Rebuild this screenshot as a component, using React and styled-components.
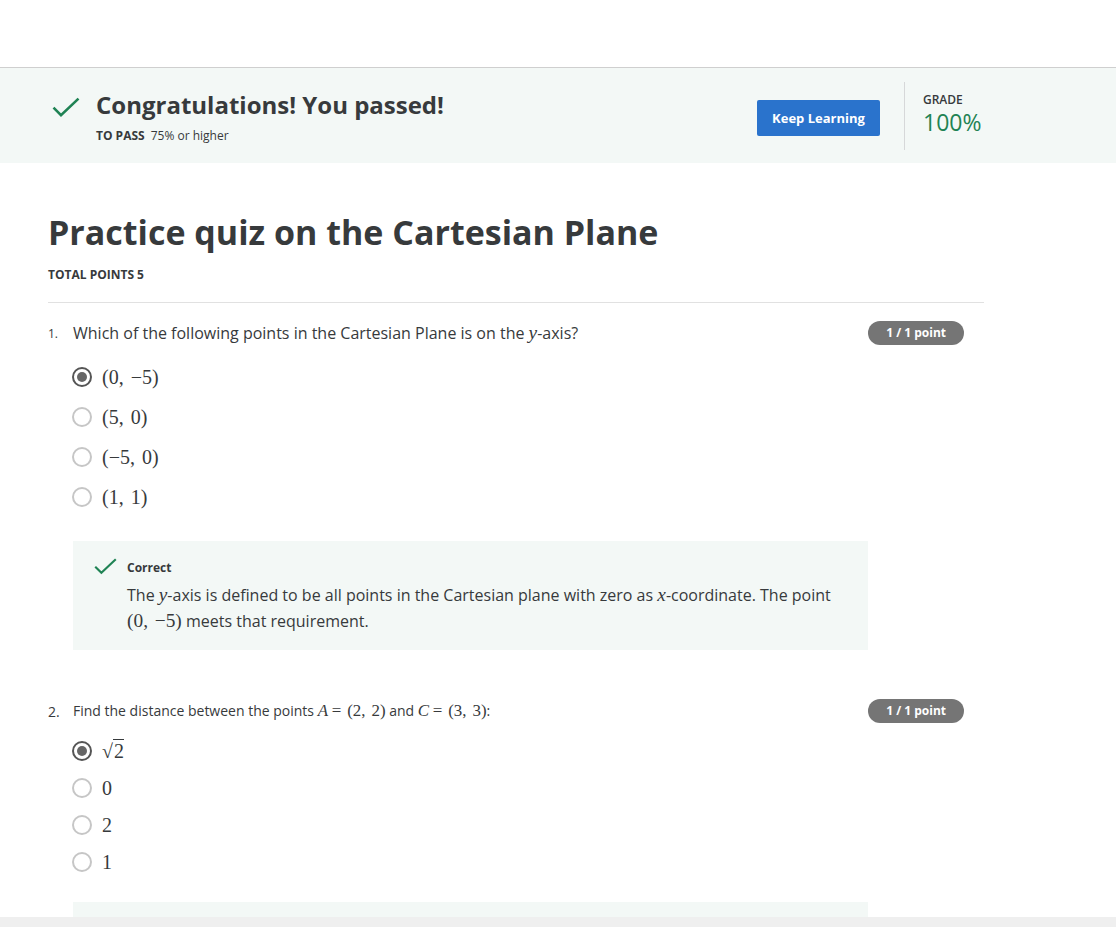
import React from 'react';
import styled, { createGlobalStyle } from 'styled-components';

const GlobalStyle = createGlobalStyle`
  html, body {
    margin: 0;
    padding: 0;
    background: #fff;
    font-family: "Open Sans", "Noto Sans", sans-serif;
    color: #1f1f1f;
  }
`;

const Page = styled.div`
  height: 927px;
  display: flex;
  flex-direction: column;
  overflow: hidden;
`;

const TopBar = styled.div`
  height: 67px;
  flex: none;
  border-bottom: 1px solid #cfcfcf;
`;

const Banner = styled.section`
  flex: none;
  height: 95px;
  background: #f3f8f6;
  display: flex;
  align-items: center;
  padding: 0 113px 0 52px;
`;

const PassGroup = styled.div`
  flex: 1;
  display: flex;
  align-items: flex-start;
  gap: 16px;
  margin-top: 2px;
`;

const PassText = styled.div`
  display: flex;
  flex-direction: column;
`;

const PassTitle = styled.h2`
  margin: 0;
  font-size: 24px;
  font-weight: 700;
  line-height: 32px;
  color: #373a3c;
`;

const PassSub = styled.div`
  font-size: 12px;
  color: #373a3c;
  margin-top: 6px;

  b {
    font-weight: 700;
    margin-right: 6px;
  }
`;

const KeepButton = styled.button`
  height: 36px;
  width: 123px;
  background: #2a73cc;
  color: #fff;
  border: none;
  border-radius: 2px;
  font-family: inherit;
  font-weight: 700;
  font-size: 13px;
  margin: 4px 24px 0 0;
`;

const VDivider = styled.div`
  width: 1px;
  height: 68px;
  background: #d6d8d9;
  margin-right: 18px;
`;

const Grade = styled.div`
  width: 80px;
  display: flex;
  flex-direction: column;
  margin-top: -4px;
`;

const GradeLabel = styled.div`
  font-size: 12px;
  font-weight: 600;
  color: #373a3c;
  line-height: 16px;
`;

const GradeValue = styled.div`
  font-size: 23px;
  color: #1f8354;
  line-height: 28px;
`;

const Content = styled.main`
  flex: 1;
  overflow: hidden;
  padding: 0 132px 0 48px;
`;

const Title = styled.h1`
  margin: 47px 0 0;
  font-size: 34px;
  line-height: 44px;
  font-weight: 700;
  color: #373a3c;
`;

const TotalPoints = styled.div`
  font-size: 12px;
  font-weight: 700;
  color: #373a3c;
  margin-top: 12px;
`;

const Rule = styled.hr`
  border: none;
  border-top: 1px solid #e1e1e1;
  margin: 19px 0 0;
`;

const Question = styled.section`
  margin-top: ${(p) => p.$top}px;
`;

const QHead = styled.div`
  display: flex;
  align-items: center;
  padding-right: 20px;
`;

const QNum = styled.span`
  width: 25px;
  flex: none;
  font-size: ${(p) => p.$size}px;
  color: #373a3c;
`;

const QText = styled.div`
  flex: 1;
  font-size: ${(p) => p.$size}px;
  color: #373a3c;
`;

const Badge = styled.span`
  background: #757575;
  color: #fff;
  font-size: 12px;
  font-weight: 700;
  border-radius: 12px;
  height: 24px;
  line-height: 24px;
  padding: 0 18px;
`;

const Math = styled.span`
  font-family: "Liberation Serif", "DejaVu Serif", serif;
  font-size: 1.21em;
  font-style: ${(p) => (p.$italic ? 'italic' : 'normal')};
  word-spacing: 0.1em;
`;

const Options = styled.div`
  display: flex;
  flex-direction: column;
  gap: ${(p) => p.$gap}px;
  margin: ${(p) => p.$top}px 0 0 24px;
`;

const Option = styled.label`
  display: flex;
  align-items: center;
  gap: 10px;
  height: 20px;
  font-family: "Liberation Serif", "DejaVu Serif", serif;
  font-size: 20px;
  color: #373a3c;
  word-spacing: 2px;
`;

const Radio = styled.span`
  width: 20px;
  height: 20px;
  box-sizing: border-box;
  border-radius: 50%;
  border: 2px solid ${(p) => (p.$checked ? '#555' : '#c6c6c6')};
  display: flex;
  align-items: center;
  justify-content: center;

  &::after {
    content: '';
    width: 10px;
    height: 10px;
    border-radius: 50%;
    background: ${(p) => (p.$checked ? '#666' : 'transparent')};
  }
`;

const Feedback = styled.div`
  margin: ${(p) => p.$top}px 116px 0 25px;
  background: #f3f8f6;
  min-height: ${(p) => p.$min}px;
  display: flex;
  gap: 10px;
  padding: 17px 20px 16px 21px;
  box-sizing: border-box;
`;

const FeedbackBody = styled.div`
  display: flex;
  flex-direction: column;
`;

const FeedbackLabel = styled.div`
  font-size: 12px;
  font-weight: 700;
  color: #373a3c;
  line-height: 20px;
`;

const FeedbackText = styled.div`
  font-size: 16px;
  line-height: 25px;
  color: #373a3c;
  margin-top: 4px;
`;

const BottomBar = styled.div`
  height: 10px;
  flex: none;
  background: #efefef;
`;

const CheckSvg = styled.svg`
  flex: none;
  margin-top: ${(p) => p.$top}px;
`;

const Check = ({ size = 28, top = 0 }) => (
  <CheckSvg width={size} height={size * 0.72} viewBox="0 0 28 20" fill="none" $top={top}>
    <path d="M1.5 10.5 L9 18 L26.5 1.5" stroke="#1f8354" strokeWidth="2.6" />
  </CheckSvg>
);

const Sqrt2 = () => (
  <span>
    √<span style={{ borderTop: '1px solid #373a3c', paddingLeft: 1 }}>2</span>
  </span>
);

const q1Options = [
  { label: '(0, −5)', checked: true },
  { label: '(5, 0)' },
  { label: '(−5, 0)' },
  { label: '(1, 1)' },
];

const q2Options = [
  { label: <Sqrt2 />, checked: true },
  { label: '0' },
  { label: '2' },
  { label: '1' },
];

export default function App() {
  return (
    <Page>
      <GlobalStyle />
      <TopBar />
      <Banner>
        <PassGroup>
          <Check top={8} />
          <PassText>
            <PassTitle>Congratulations! You passed!</PassTitle>
            <PassSub>
              <b>TO PASS</b>75% or higher
            </PassSub>
          </PassText>
        </PassGroup>
        <KeepButton>Keep Learning</KeepButton>
        <VDivider />
        <Grade>
          <GradeLabel>GRADE</GradeLabel>
          <GradeValue>100%</GradeValue>
        </Grade>
      </Banner>

      <Content>
        <Title>Practice quiz on the Cartesian Plane</Title>
        <TotalPoints>TOTAL POINTS 5</TotalPoints>
        <Rule />

        <Question $top={18}>
          <QHead>
            <QNum $size={12}>1.</QNum>
            <QText $size={16}>
              Which of the following points in the Cartesian Plane is on the <Math $italic>y</Math>-axis?
            </QText>
            <Badge>1 / 1 point</Badge>
          </QHead>
          <Options $gap={20} $top={22}>
            {q1Options.map((o, i) => (
              <Option key={i}>
                <Radio $checked={o.checked} />
                {o.label}
              </Option>
            ))}
          </Options>
          <Feedback $top={34} $min={105}>
            <Check size={23} />
            <FeedbackBody>
              <FeedbackLabel>Correct</FeedbackLabel>
              <FeedbackText>
                The <Math $italic>y</Math>-axis is defined to be all points in the Cartesian plane with zero as{' '}
                <Math $italic>x</Math>-coordinate. The point <Math>(0, −5)</Math> meets that requirement.
              </FeedbackText>
            </FeedbackBody>
          </Feedback>
        </Question>

        <Question $top={49}>
          <QHead>
            <QNum $size={14}>2.</QNum>
            <QText $size={14}>
              Find the distance between the points <Math $italic>A</Math> <Math>= (2, 2)</Math> and{' '}
              <Math $italic>C</Math> <Math>= (3, 3)</Math>:
            </QText>
            <Badge>1 / 1 point</Badge>
          </QHead>
          <Options $gap={17} $top={18}>
            {q2Options.map((o, i) => (
              <Option key={i}>
                <Radio $checked={o.checked} />
                {o.label}
              </Option>
            ))}
          </Options>
          <Feedback $top={30} $min={60} />
        </Question>
      </Content>
      <BottomBar />
    </Page>
  );
}
